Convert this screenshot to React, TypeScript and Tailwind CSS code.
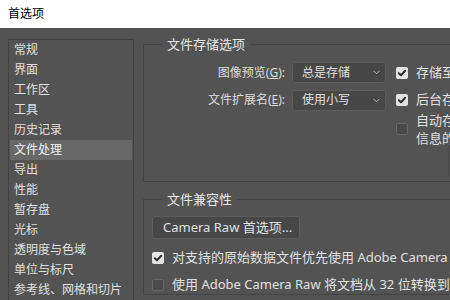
import React from 'react';

const menuItems = [
  '常规', '界面', '工作区', '工具', '历史记录', '文件处理', '导出',
  '性能', '暂存盘', '光标', '透明度与色域', '单位与标尺', '参考线、网格和切片',
];

function CheckBox({ checked }: { checked: boolean }) {
  if (checked) {
    return (
      <span className="flex-none w-[12px] h-[12px] rounded-[2px] bg-[#e4e4e4] flex items-center justify-center">
        <svg width="12" height="12" viewBox="0 0 12 12">
          <path d="M2.8 6.2 L5 8.3 L9.2 3.8" fill="none" stroke="#2e2e2e" strokeWidth="2" strokeLinecap="round" strokeLinejoin="round" />
        </svg>
      </span>
    );
  }
  return <span className="flex-none w-[12px] h-[12px] rounded-[2px] bg-[#4a4a4a] border border-[#686868]" />;
}

function Select({ value }: { value: string }) {
  return (
    <div className="ml-[7px] w-[94px] h-[21px] flex-none rounded-[3px] bg-[#474747] border border-[#5c5c5c] flex items-center justify-between pl-[9px] pr-[5px]">
      <span>{value}</span>
      <svg width="7" height="5" viewBox="0 0 7 5">
        <polyline points="0.5,0.8 3.5,3.8 6.5,0.8" fill="none" stroke="#b4b4b4" strokeWidth="1" />
      </svg>
    </div>
  );
}

export default function App() {
  return (
    <div className="w-[450px] h-[300px] overflow-hidden font-['Noto_Sans','Noto_Sans_CJK_SC',sans-serif] text-[12px]">
      {/* title bar */}
      <div className="h-[28px] bg-white flex items-center pl-[8px] text-black">首选项</div>

      <div className="flex h-[272px] bg-[#535353] text-[#e0e0e0]">
        {/* category list */}
        <div className="ml-[8px] mt-[11px] w-[126px] flex-none border border-b-0 border-[#414141]">
          {menuItems.map((item) => (
            <div
              key={item}
              className={
                item === '文件处理'
                  ? 'mx-px h-[20px] leading-[20px] pl-[4px] whitespace-nowrap bg-[#686868] text-[#f2f2f2]'
                  : 'mx-px h-[20px] leading-[20px] pl-[4px] whitespace-nowrap'
              }
            >
              {item}
            </div>
          ))}
        </div>

        {/* settings */}
        <div className="ml-[9px] pt-[7px] flex flex-col gap-[8px] flex-none">
          <fieldset className="w-[340px] border border-[#444444] p-0 m-0">
            <legend className="ml-[18px] px-[5px] h-[18px] leading-[18px] text-[13px] text-[#e6e6e6]">文件存储选项</legend>
            <div className="pt-[9px] pb-[5px] flex flex-col">
              <div className="flex items-center h-[21px]">
                <div className="w-[141px] text-right flex-none text-[#dcdcdc]">
                  图像预览(<span className="underline">G</span>):
                </div>
                <Select value="总是存储" />
                <div className="ml-[10px] flex items-center gap-[8px] whitespace-nowrap text-[13px]">
                  <CheckBox checked />
                  <span>存储至原始文件夹</span>
                </div>
              </div>
              <div className="flex items-center h-[22px] mt-[6px]">
                <div className="w-[141px] text-right flex-none text-[#dcdcdc]">
                  文件扩展名(<span className="underline">E</span>):
                </div>
                <Select value="使用小写" />
                <div className="ml-[10px] flex items-center gap-[8px] whitespace-nowrap text-[13px]">
                  <CheckBox checked />
                  <span>后台存储</span>
                </div>
              </div>
              <div className="flex items-center pl-[252px]">
                <CheckBox checked={false} />
                <div className="ml-[8px] leading-[18px] whitespace-nowrap text-[13px]">
                  <div>自动存储恢复</div>
                  <div>信息的时间间隔:</div>
                </div>
              </div>
              <div className="ml-[304px] mt-[-2px] h-[31px] w-[40px] border-l border-t border-[#474747] rounded-tl-[3px]" />
            </div>
          </fieldset>

          <fieldset className="w-[340px] border border-[#444444] p-0 m-0">
            <legend className="ml-[18px] px-[5px] h-[18px] leading-[18px] text-[13px] text-[#e6e6e6]">文件兼容性</legend>
            <div className="pt-[8px] pl-[8px] flex flex-col text-[13px]">
              <div className="w-[148px] h-[23px] rounded-[3px] bg-[#474747] border border-[#5c5c5c] flex items-center pl-[10px] whitespace-nowrap">
                Camera Raw 首选项...
              </div>
              <div className="mt-[10px] h-[18px] flex items-center gap-[8px] whitespace-nowrap">
                <CheckBox checked />
                <span>对支持的原始数据文件优先使用 Adobe Camera Raw</span>
              </div>
              <div className="mt-[9px] h-[18px] flex items-center gap-[8px] whitespace-nowrap">
                <CheckBox checked={false} />
                <span>
                  使用 Adobe Camera Raw 将文档从 32 位转换到 <span className="text-[#8ab4e6]">16/8 位</span>
                </span>
              </div>
            </div>
          </fieldset>
        </div>
      </div>
    </div>
  );
}
